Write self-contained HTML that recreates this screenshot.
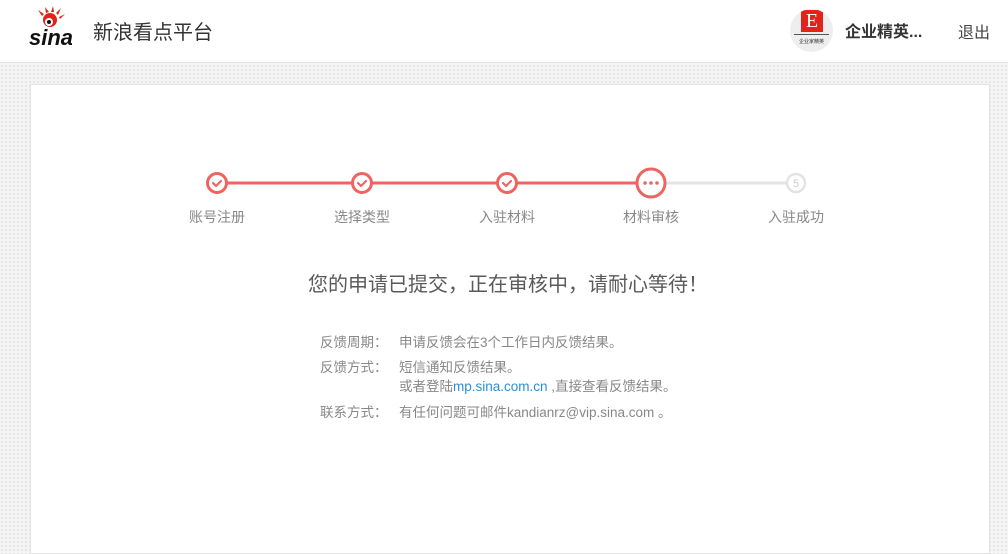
<!DOCTYPE html>
<html><head><meta charset="utf-8"><style>
*{margin:0;padding:0;box-sizing:border-box}
body{width:1008px;height:544px;overflow:hidden;font-family:"Liberation Sans","Noto Sans CJK SC",sans-serif;background-color:#f4f4f4;background-image:radial-gradient(#e2e2e2 0.8px,transparent 0.9px);background-size:4px 4px;position:relative}
.hd{position:absolute;left:0;top:0;width:1008px;height:63px;background:#fff;border-bottom:1px solid #e3e3e3}
.card{position:absolute;left:30px;top:84px;width:960px;height:470px;background:#fff;border:1px solid #e3e3e3}
.abs{position:absolute;white-space:nowrap}
.lbl{font-size:14px;color:#888;transform:translateX(-50%);top:207px}
.info{font-size:13.5px;color:#888}
</style></head><body>
<div class="hd">
 <div class="abs" style="left:28px;top:6px;width:44px;height:44px">
  <svg width="44" height="44" viewBox="0 0 44 44">
   <g fill="#e2231a"><circle cx="22" cy="14" r="7"/><path d="M14 10 L10 4 L16 8Z M18 7 L17 1 L21 6Z M23 6 L25 0 L26 6Z M28 7 L33 2 L30 9Z M31 11 L37 8 L32 13Z"/></g>
   <circle cx="21" cy="16" r="4" fill="#fff"/><circle cx="21" cy="16" r="2" fill="#111"/>
   <text x="1" y="39" font-size="22" font-weight="bold" font-style="italic" fill="#111" font-family="Liberation Sans">sina</text>
  </svg>
 </div>
 <div class="abs" style="left:93px;top:16px;font-size:20px;color:#333">新浪看点平台</div>
 <div class="abs" style="left:790px;top:9px;width:43px;height:43px;border-radius:50%;background:#eee;overflow:hidden">
  <div style="position:absolute;left:11px;top:1px;width:22px;height:22px;background:#e2231a;color:#fff;font:20px 'Liberation Serif',serif;text-align:center;line-height:22px">E</div>
  <div style="position:absolute;left:4px;top:25px;width:35px;height:1px;background:#555"></div>
  <div style="position:absolute;left:0;top:29px;width:43px;text-align:center;font-size:5px;color:#333">企业家精英</div>
 </div>
 <div class="abs" style="left:845px;top:18px;font-size:16px;font-weight:bold;color:#333">企业精英...</div>
 <div class="abs" style="left:958px;top:19px;font-size:16px;color:#444">退出</div>
</div>
<div class="card"></div>
<svg class="abs" style="left:0;top:0" width="1008" height="240">
 <line x1="217" y1="183" x2="651" y2="183" stroke="#ef6461" stroke-width="3"/>
 <line x1="651" y1="183" x2="796" y2="183" stroke="#e3e3e3" stroke-width="3"/>
 <g fill="#fff" stroke="#ef6461" stroke-width="3">
  <circle cx="217" cy="183" r="9.5"/><circle cx="362" cy="183" r="9.5"/><circle cx="507" cy="183" r="9.5"/><circle cx="651" cy="183" r="14"/>
 </g>
 <g fill="none" stroke="#ef6461" stroke-width="2.2" stroke-linecap="round" stroke-linejoin="round">
  <path d="M213 183 l3 3 l5 -5"/><path d="M358 183 l3 3 l5 -5"/><path d="M503 183 l3 3 l5 -5"/>
 </g>
 <g fill="#ef6461"><circle cx="645" cy="183" r="1.8"/><circle cx="651" cy="183" r="1.8"/><circle cx="657" cy="183" r="1.8"/></g>
 <circle cx="796" cy="183" r="9" fill="#fff" stroke="#e3e3e3" stroke-width="2.5"/>
 <text x="796" y="187" font-size="11" fill="#ccc" text-anchor="middle" font-family="Liberation Sans">5</text>
</svg>
<div class="abs lbl" style="left:217px">账号注册</div>
<div class="abs lbl" style="left:362px">选择类型</div>
<div class="abs lbl" style="left:507px">入驻材料</div>
<div class="abs lbl" style="left:651px">材料审核</div>
<div class="abs lbl" style="left:796px">入驻成功</div>
<div class="abs" style="left:508px;top:268px;transform:translateX(-50%);font-size:20px;color:#5a5a5a">您的申请已提交，正在审核中，请耐心等待！</div>
<div class="abs info" style="left:320px;top:331px">反馈周期：</div>
<div class="abs info" style="left:399px;top:331px">申请反馈会在3个工作日内反馈结果。</div>
<div class="abs info" style="left:320px;top:356px">反馈方式：</div>
<div class="abs info" style="left:399px;top:356px">短信通知反馈结果。</div>
<div class="abs info" style="left:399px;top:375px">或者登陆<span style="color:#2a8fd6">mp.sina.com.cn</span> ,直接查看反馈结果。</div>
<div class="abs info" style="left:320px;top:401px">联系方式：</div>
<div class="abs info" style="left:399px;top:401px">有任何问题可邮件kandianrz@vip.sina.com 。</div>
</body></html>
